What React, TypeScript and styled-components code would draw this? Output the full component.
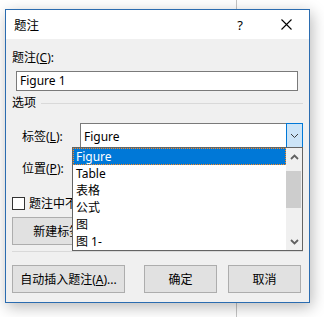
import React from "react";
import styled, { createGlobalStyle } from "styled-components";

const GlobalStyle = createGlobalStyle`
  html, body {
    margin: 0;
    padding: 0;
  }
  body {
    width: 324px;
    height: 317px;
    overflow: hidden;
    background:
      linear-gradient(to right, transparent 236px, #c4c4c4 236px, #c4c4c4 237px, transparent 237px),
      #ffffff;
    font-family: "Noto Sans", "Noto Sans CJK SC", sans-serif;
    font-size: 12px;
    color: #000;
  }
`;

const Page = styled.div`
  padding: 9px 0 0 5px;
`;

const Dialog = styled.div`
  position: relative;
  width: 305px;
  height: 294px;
  box-sizing: border-box;
  border: 1px solid #2b6cb0;
  background: #f0f0f0;
  box-shadow: 2px 4px 14px rgba(0, 0, 0, 0.28);
  display: flex;
  flex-direction: column;
`;

const TitleBar = styled.div`
  height: 29px;
  background: #ffffff;
  display: flex;
  align-items: center;
  padding-left: 8px;
`;

const Title = styled.span`
  flex: 1;
  font-size: 12.5px;
`;

const CaptionButton = styled.div`
  width: 46px;
  height: 29px;
  display: flex;
  align-items: center;
  justify-content: center;
  font-size: 13px;
`;

const Body = styled.div`
  flex: 1;
  padding: 0 6px;
  display: flex;
  flex-direction: column;
`;

const Label = styled.div<{ $top?: number }>`
  height: 17px;
  line-height: 17px;
  margin-top: ${(p) => p.$top ?? 0}px;
  white-space: nowrap;
`;

const TextInput = styled.div`
  margin: 5px 5px 0 4px;
  height: 20px;
  box-sizing: border-box;
  border: 1px solid #7a7a7a;
  background: #fff;
  padding-left: 3px;
  line-height: 17px;
`;

const GroupHead = styled.div`
  margin-top: 3px;
  display: flex;
  align-items: center;
  gap: 5px;
`;

const Rule = styled.div<{ $top?: number; $fixed?: boolean }>`
  flex: ${(p) => (p.$fixed ? "none" : 1)};
  height: 1px;
  background: #d9d9d9;
  margin-top: ${(p) => p.$top ?? 0}px;
`;

const FieldRow = styled.div<{ $top: number }>`
  margin-top: ${(p) => p.$top}px;
  display: flex;
  align-items: center;
  height: 26px;
`;

const FieldLabel = styled.div`
  width: 60px;
  padding-left: 10px;
  white-space: nowrap;
`;

const Combo = styled.div`
  width: 231px;
  height: 26px;
  box-sizing: border-box;
  border: 1px solid #7a7a7a;
  background: #fff;
  display: flex;
  align-items: center;
`;

const ComboText = styled.div`
  flex: 1;
  padding-left: 3px;
`;

const ComboButton = styled.div<{ $focus?: boolean }>`
  width: 17px;
  height: 26px;
  margin: -1px -1px -1px 0;
  box-sizing: border-box;
  border: 1px solid ${(p) => (p.$focus ? "#0078d7" : "transparent")};
  background: ${(p) => (p.$focus ? "#cce4f7" : "transparent")};
  display: flex;
  align-items: center;
  justify-content: center;
`;

const CheckRow = styled.div`
  margin-top: 15px;
  display: flex;
  align-items: center;
  gap: 4px;
  height: 14px;
`;

const CheckBox = styled.div`
  width: 13px;
  height: 13px;
  box-sizing: border-box;
  border: 1px solid #333;
  background: #fff;
`;

const ButtonRow = styled.div<{ $top: number }>`
  margin-top: ${(p) => p.$top}px;
  display: flex;
  gap: 10px;
`;

const Button = styled.div<{ $w: number; $ml?: number }>`
  width: ${(p) => p.$w}px;
  margin-left: ${(p) => p.$ml ?? 0}px;
  height: 28px;
  box-sizing: border-box;
  border: 1px solid #adadad;
  background: #e1e1e1;
  display: flex;
  align-items: center;
  justify-content: center;
  white-space: nowrap;
`;

const DropList = styled.div`
  position: absolute;
  left: 66px;
  top: 137px;
  width: 231px;
  height: 104px;
  box-sizing: border-box;
  border: 1px solid #646464;
  background: #fff;
  display: flex;
`;

const Items = styled.div`
  flex: 1;
  display: flex;
  flex-direction: column;
`;

const Item = styled.div<{ $selected?: boolean }>`
  height: 17px;
  line-height: 16px;
  padding-left: 2px;
  box-sizing: border-box;
  background: ${(p) => (p.$selected ? "#0078d7" : "transparent")};
  color: ${(p) => (p.$selected ? "#fff" : "#000")};
  border: 1px ${(p) => (p.$selected ? "dotted #ff8a1e" : "solid transparent")};
  white-space: nowrap;
`;

const ScrollBar = styled.div`
  width: 16px;
  background: #f0f0f0;
  display: flex;
  flex-direction: column;
  align-items: center;
`;

const ScrollArrow = styled.div`
  height: 17px;
  width: 16px;
  display: flex;
  align-items: center;
  justify-content: center;
`;

const ScrollTrack = styled.div`
  flex: 1;
  width: 16px;
`;

const Thumb = styled.div`
  margin-top: 6px;
  height: 37px;
  width: 15px;
  background: #cdcdcd;
`;

const Chevron = ({ up, color, bold }: { up?: boolean; color: string; bold?: boolean }) => (
  <svg width="9" height="6" viewBox="0 0 9 6">
    <path
      d={up ? "M1 5 L4.5 1.5 L8 5" : "M1 1 L4.5 4.5 L8 1"}
      fill="none"
      stroke={color}
      strokeWidth={bold ? 1.8 : 1}
    />
  </svg>
);

const CloseIcon = () => (
  <svg width="11" height="11" viewBox="0 0 11 11">
    <path d="M0.5 0.5 L10.5 10.5 M10.5 0.5 L0.5 10.5" stroke="#000" strokeWidth="1.1" />
  </svg>
);

const items = ["Figure", "Table", "表格", "公式", "图", "图 1-"];

export default function App() {
  return (
    <Page>
      <GlobalStyle />
      <Dialog>
        <TitleBar>
          <Title>题注</Title>
          <CaptionButton>?</CaptionButton>
          <CaptionButton>
            <CloseIcon />
          </CaptionButton>
        </TitleBar>
        <Body>
          <Label $top={10}>
            题注(<u>C</u>):
          </Label>
          <TextInput>Figure 1</TextInput>
          <GroupHead>
            <Label>选项</Label>
            <Rule $top={1} />
          </GroupHead>
          <FieldRow $top={12}>
            <FieldLabel>
              标签(<u>L</u>):
            </FieldLabel>
            <Combo>
              <ComboText>Figure</ComboText>
              <ComboButton $focus>
                <Chevron color="#3c3c3c" />
              </ComboButton>
            </Combo>
          </FieldRow>
          <FieldRow $top={6}>
            <FieldLabel>
              位置(<u>P</u>):
            </FieldLabel>
            <Combo>
              <ComboText />
              <ComboButton>
                <Chevron color="#3c3c3c" />
              </ComboButton>
            </Combo>
          </FieldRow>
          <CheckRow>
            <CheckBox />
            <span>题注中不包含</span>
          </CheckRow>
          <ButtonRow $top={7}>
            <Button $w={100}>新建标签...</Button>
          </ButtonRow>
          <Rule $top={6} $fixed />
          <ButtonRow $top={13}>
            <Button $w={113}>
              自动插入题注(<u>A</u>)...
            </Button>
            <Button $w={73} $ml={9}>
              确定
            </Button>
            <Button $w={73} $ml={1}>
              取消
            </Button>
          </ButtonRow>
        </Body>
        <DropList>
          <Items>
            {items.map((t, i) => (
              <Item key={t} $selected={i === 0}>
                {t}
              </Item>
            ))}
          </Items>
          <ScrollBar>
            <ScrollArrow>
              <Chevron up bold color="#606060" />
            </ScrollArrow>
            <ScrollTrack>
              <Thumb />
            </ScrollTrack>
            <ScrollArrow>
              <Chevron bold color="#606060" />
            </ScrollArrow>
          </ScrollBar>
        </DropList>
      </Dialog>
    </Page>
  );
}
